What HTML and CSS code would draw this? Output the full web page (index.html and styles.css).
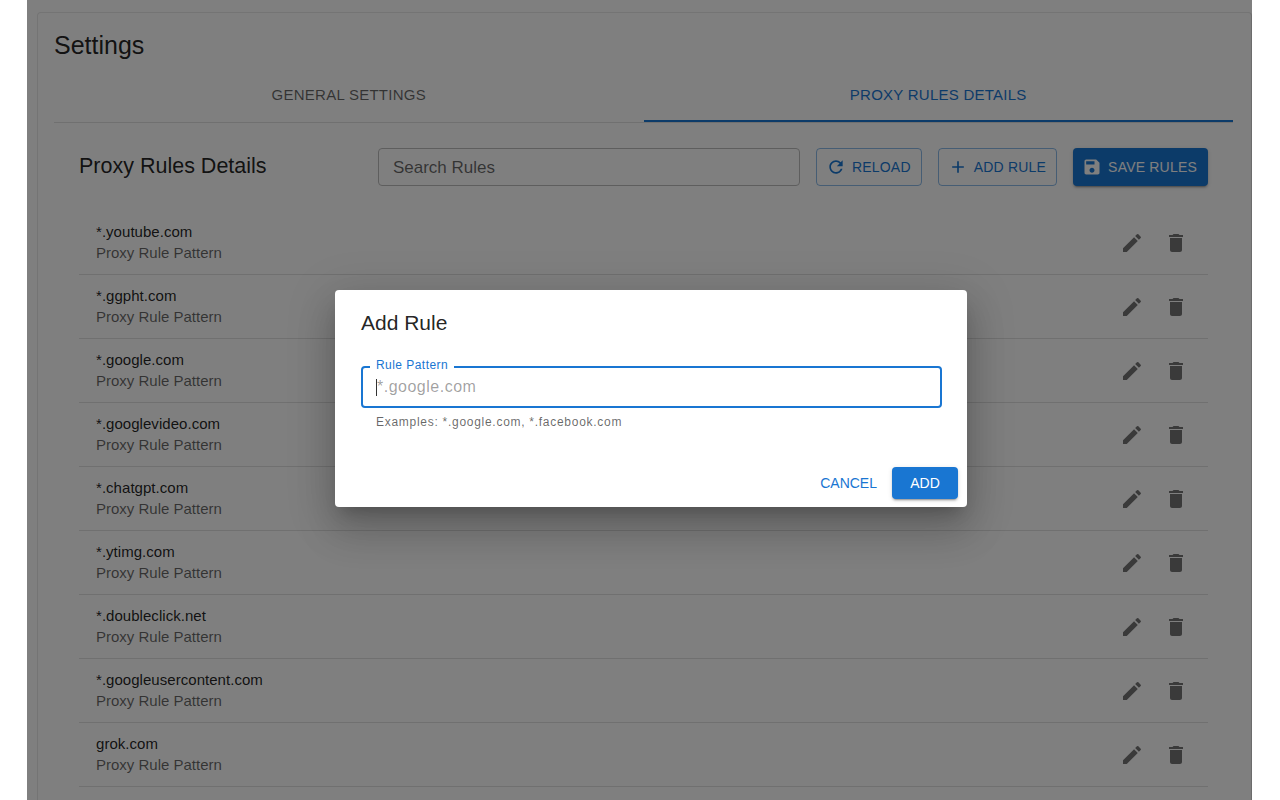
FILE: index.html
```html
<!DOCTYPE html>
<html lang="en">

<head>
  <meta charset="UTF-8">
  <meta name="viewport" content="width=device-width, initial-scale=1.0">
  <title>Settings</title>
  <link rel="stylesheet" href="styles.css">
</head>

<body>
  <div class="screen">
    <div class="card">
      <h2 class="card-title">Settings</h2>
      <div class="tabs">
        <div class="tab">GENERAL SETTINGS</div>
        <div class="tab tab-active">PROXY RULES DETAILS</div>
      </div>

      <div class="panel">
        <div class="toolbar">
          <h3 class="panel-title">Proxy Rules Details</h3>
          <div class="search">Search Rules</div>
          <button class="btn btn-outline">
            <svg viewBox="0 0 24 24"><path d="M17.65 6.35C16.2 4.9 14.21 4 12 4c-4.42 0-7.99 3.58-7.99 8s3.57 8 7.99 8c3.73 0 6.84-2.55 7.73-6h-2.08c-.82 2.33-3.04 4-5.65 4-3.31 0-6-2.69-6-6s2.69-6 6-6c1.66 0 3.14.69 4.22 1.78L13 11h7V4l-2.35 2.35z"/></svg>
            RELOAD
          </button>
          <button class="btn btn-outline">
            <svg viewBox="0 0 24 24"><path d="M19 13h-6v6h-2v-6H5v-2h6V5h2v6h6v2z"/></svg>
            ADD RULE
          </button>
          <button class="btn btn-solid">
            <svg viewBox="0 0 24 24"><path d="M17 3H5c-1.11 0-2 .9-2 2v14c0 1.1.89 2 2 2h14c1.1 0 2-.9 2-2V7l-4-4zm-5 16c-1.66 0-3-1.34-3-3s1.34-3 3-3 3 1.34 3 3-1.34 3-3 3zm3-10H5V5h10v4z"/></svg>
            SAVE RULES
          </button>
        </div>

        <ul class="rules">
          <li class="rule">
            <div class="rule-text"><div class="rule-name">*.youtube.com</div><div class="rule-sub">Proxy Rule Pattern</div></div>
            <svg class="icon" viewBox="0 0 24 24"><path d="M3 17.25V21h3.75L17.81 9.94l-3.75-3.75L3 17.25zM20.71 7.04c.39-.39.39-1.02 0-1.41l-2.34-2.34a.9959.9959 0 0 0-1.41 0l-1.83 1.83 3.75 3.75 1.83-1.83z"/></svg>
            <svg class="icon" viewBox="0 0 24 24"><path d="M6 19c0 1.1.9 2 2 2h8c1.1 0 2-.9 2-2V7H6v12zM19 4h-3.5l-1-1h-5l-1 1H5v2h14V4z"/></svg>
          </li>
          <li class="rule">
            <div class="rule-text"><div class="rule-name">*.ggpht.com</div><div class="rule-sub">Proxy Rule Pattern</div></div>
            <svg class="icon" viewBox="0 0 24 24"><path d="M3 17.25V21h3.75L17.81 9.94l-3.75-3.75L3 17.25zM20.71 7.04c.39-.39.39-1.02 0-1.41l-2.34-2.34a.9959.9959 0 0 0-1.41 0l-1.83 1.83 3.75 3.75 1.83-1.83z"/></svg>
            <svg class="icon" viewBox="0 0 24 24"><path d="M6 19c0 1.1.9 2 2 2h8c1.1 0 2-.9 2-2V7H6v12zM19 4h-3.5l-1-1h-5l-1 1H5v2h14V4z"/></svg>
          </li>
          <li class="rule">
            <div class="rule-text"><div class="rule-name">*.google.com</div><div class="rule-sub">Proxy Rule Pattern</div></div>
            <svg class="icon" viewBox="0 0 24 24"><path d="M3 17.25V21h3.75L17.81 9.94l-3.75-3.75L3 17.25zM20.71 7.04c.39-.39.39-1.02 0-1.41l-2.34-2.34a.9959.9959 0 0 0-1.41 0l-1.83 1.83 3.75 3.75 1.83-1.83z"/></svg>
            <svg class="icon" viewBox="0 0 24 24"><path d="M6 19c0 1.1.9 2 2 2h8c1.1 0 2-.9 2-2V7H6v12zM19 4h-3.5l-1-1h-5l-1 1H5v2h14V4z"/></svg>
          </li>
          <li class="rule">
            <div class="rule-text"><div class="rule-name">*.googlevideo.com</div><div class="rule-sub">Proxy Rule Pattern</div></div>
            <svg class="icon" viewBox="0 0 24 24"><path d="M3 17.25V21h3.75L17.81 9.94l-3.75-3.75L3 17.25zM20.71 7.04c.39-.39.39-1.02 0-1.41l-2.34-2.34a.9959.9959 0 0 0-1.41 0l-1.83 1.83 3.75 3.75 1.83-1.83z"/></svg>
            <svg class="icon" viewBox="0 0 24 24"><path d="M6 19c0 1.1.9 2 2 2h8c1.1 0 2-.9 2-2V7H6v12zM19 4h-3.5l-1-1h-5l-1 1H5v2h14V4z"/></svg>
          </li>
          <li class="rule">
            <div class="rule-text"><div class="rule-name">*.chatgpt.com</div><div class="rule-sub">Proxy Rule Pattern</div></div>
            <svg class="icon" viewBox="0 0 24 24"><path d="M3 17.25V21h3.75L17.81 9.94l-3.75-3.75L3 17.25zM20.71 7.04c.39-.39.39-1.02 0-1.41l-2.34-2.34a.9959.9959 0 0 0-1.41 0l-1.83 1.83 3.75 3.75 1.83-1.83z"/></svg>
            <svg class="icon" viewBox="0 0 24 24"><path d="M6 19c0 1.1.9 2 2 2h8c1.1 0 2-.9 2-2V7H6v12zM19 4h-3.5l-1-1h-5l-1 1H5v2h14V4z"/></svg>
          </li>
          <li class="rule">
            <div class="rule-text"><div class="rule-name">*.ytimg.com</div><div class="rule-sub">Proxy Rule Pattern</div></div>
            <svg class="icon" viewBox="0 0 24 24"><path d="M3 17.25V21h3.75L17.81 9.94l-3.75-3.75L3 17.25zM20.71 7.04c.39-.39.39-1.02 0-1.41l-2.34-2.34a.9959.9959 0 0 0-1.41 0l-1.83 1.83 3.75 3.75 1.83-1.83z"/></svg>
            <svg class="icon" viewBox="0 0 24 24"><path d="M6 19c0 1.1.9 2 2 2h8c1.1 0 2-.9 2-2V7H6v12zM19 4h-3.5l-1-1h-5l-1 1H5v2h14V4z"/></svg>
          </li>
          <li class="rule">
            <div class="rule-text"><div class="rule-name">*.doubleclick.net</div><div class="rule-sub">Proxy Rule Pattern</div></div>
            <svg class="icon" viewBox="0 0 24 24"><path d="M3 17.25V21h3.75L17.81 9.94l-3.75-3.75L3 17.25zM20.71 7.04c.39-.39.39-1.02 0-1.41l-2.34-2.34a.9959.9959 0 0 0-1.41 0l-1.83 1.83 3.75 3.75 1.83-1.83z"/></svg>
            <svg class="icon" viewBox="0 0 24 24"><path d="M6 19c0 1.1.9 2 2 2h8c1.1 0 2-.9 2-2V7H6v12zM19 4h-3.5l-1-1h-5l-1 1H5v2h14V4z"/></svg>
          </li>
          <li class="rule">
            <div class="rule-text"><div class="rule-name">*.googleusercontent.com</div><div class="rule-sub">Proxy Rule Pattern</div></div>
            <svg class="icon" viewBox="0 0 24 24"><path d="M3 17.25V21h3.75L17.81 9.94l-3.75-3.75L3 17.25zM20.71 7.04c.39-.39.39-1.02 0-1.41l-2.34-2.34a.9959.9959 0 0 0-1.41 0l-1.83 1.83 3.75 3.75 1.83-1.83z"/></svg>
            <svg class="icon" viewBox="0 0 24 24"><path d="M6 19c0 1.1.9 2 2 2h8c1.1 0 2-.9 2-2V7H6v12zM19 4h-3.5l-1-1h-5l-1 1H5v2h14V4z"/></svg>
          </li>
          <li class="rule">
            <div class="rule-text"><div class="rule-name">grok.com</div><div class="rule-sub">Proxy Rule Pattern</div></div>
            <svg class="icon" viewBox="0 0 24 24"><path d="M3 17.25V21h3.75L17.81 9.94l-3.75-3.75L3 17.25zM20.71 7.04c.39-.39.39-1.02 0-1.41l-2.34-2.34a.9959.9959 0 0 0-1.41 0l-1.83 1.83 3.75 3.75 1.83-1.83z"/></svg>
            <svg class="icon" viewBox="0 0 24 24"><path d="M6 19c0 1.1.9 2 2 2h8c1.1 0 2-.9 2-2V7H6v12zM19 4h-3.5l-1-1h-5l-1 1H5v2h14V4z"/></svg>
          </li>
        </ul>
      </div>
    </div>

    <div class="backdrop"></div>

    <div class="dialog">
      <h2 class="dialog-title">Add Rule</h2>
      <div class="field">
        <span class="field-label">Rule Pattern</span>
        <span class="caret"></span>
        <input class="field-input" type="text" placeholder="*.google.com">
      </div>
      <p class="helper">Examples: *.google.com, *.facebook.com</p>
      <div class="dialog-actions">
        <button class="btn-text">CANCEL</button>
        <button class="btn-add">ADD</button>
      </div>
    </div>
  </div>
</body>

</html>
```

FILE: styles.css
```css
html,
body {
  margin: 0;
  height: 100%;
  overflow: hidden;
  background-color: #ffffff;
}

body {
  font-family: "Liberation Sans", Arial, sans-serif;
  color: rgba(0, 0, 0, 0.87);
}

.screen {
  position: relative;
  width: 1225px;
  height: 800px;
  margin-left: 27px;
  padding: 12px 0 0 10px;
  box-sizing: border-box;
  overflow: hidden;
  background-color: #ffffff;
}

.card {
  border: 1px solid #e8e8e8;
  border-right-color: #d8d8d8;
  border-radius: 4px;
  padding: 16px 18px 0 16px;
  height: 900px;
}

.card-title {
  margin: 0;
  font-size: 25px;
  font-weight: 400;
  line-height: 32px;
}

.tabs {
  display: flex;
  margin-top: 17px;
  border-bottom: 1px solid #e0e0e0;
}

.tab {
  flex: 1;
  height: 44px;
  line-height: 34px;
  box-sizing: border-box;
  text-align: center;
  font-size: 15px;
  letter-spacing: 0.25px;
  color: rgba(0, 0, 0, 0.6);
}

.tab-active {
  color: #1976d2;
  border-bottom: 2px solid #1976d2;
}

.panel {
  padding: 25px 25px 0;
}

.toolbar {
  display: flex;
  align-items: center;
  gap: 16px;
}

.panel-title {
  margin: 0 0 2px;
  flex: 1;
  font-size: 21.5px;
  font-weight: 400;
}

.search {
  width: 422px;
  height: 38px;
  line-height: 38px;
  box-sizing: border-box;
  padding-left: 14px;
  border: 1px solid #bdbdbd;
  border-radius: 4px;
  font-size: 17px;
  color: rgba(0, 0, 0, 0.6);
}

.btn {
  display: flex;
  align-items: center;
  gap: 6px;
  height: 38px;
  box-sizing: border-box;
  padding: 0 10px 0 9px;
  border-radius: 4px;
  font-family: inherit;
  font-size: 14px;
  letter-spacing: 0.2px;
}

.btn svg {
  width: 20px;
  height: 20px;
  fill: currentColor;
}

.btn-outline {
  background-color: transparent;
  border: 1px solid rgba(25, 118, 210, 0.5);
  color: #1976d2;
}

.btn-solid {
  padding-right: 11px;
  background-color: #1976d2;
  border: none;
  color: #ffffff;
  box-shadow: 0 3px 1px -2px rgba(0, 0, 0, 0.2), 0 2px 2px 0 rgba(0, 0, 0, 0.14), 0 1px 5px 0 rgba(0, 0, 0, 0.12);
}

.rules {
  list-style: none;
  margin: 25px 0 0;
  padding: 0;
}

.rule {
  display: flex;
  align-items: center;
  gap: 20px;
  height: 64px;
  box-sizing: border-box;
  padding: 0 20px 0 17px;
  border-bottom: 1px solid #e0e0e0;
}

.rule-text {
  flex: 1;
}

.rule-name {
  font-size: 15px;
  line-height: 21px;
  letter-spacing: 0.04px;
}

.rule-sub {
  font-size: 15px;
  line-height: 22px;
  color: rgba(0, 0, 0, 0.6);
}

.icon {
  width: 24px;
  height: 24px;
  fill: rgba(0, 0, 0, 0.54);
}

.backdrop {
  position: absolute;
  top: 0;
  left: 0;
  right: 0;
  bottom: 0;
  background-color: rgba(0, 0, 0, 0.5);
}

.dialog {
  position: absolute;
  top: 290px;
  left: 308px;
  width: 632px;
  height: 217px;
  box-sizing: border-box;
  padding: 16px 25px 0 26px;
  border-radius: 4px;
  background-color: #ffffff;
  box-shadow: 0 11px 15px -7px rgba(0, 0, 0, 0.2), 0 24px 38px 3px rgba(0, 0, 0, 0.14), 0 9px 46px 8px rgba(0, 0, 0, 0.12);
}

.dialog-title {
  margin: 0;
  font-size: 21px;
  font-weight: 400;
  line-height: 34px;
}

.field {
  position: relative;
  display: flex;
  align-items: center;
  height: 42px;
  box-sizing: border-box;
  margin-top: 26px;
  padding-left: 13px;
  border: 2px solid #1976d2;
  border-radius: 4px;
}

.field-label {
  position: absolute;
  top: -10px;
  left: 7px;
  padding: 0 6px;
  background-color: #ffffff;
  font-size: 12px;
  line-height: 14px;
  letter-spacing: 0.45px;
  color: #1976d2;
}

.caret {
  width: 1px;
  height: 17px;
  background-color: #333333;
}

.field-input {
  flex: 1;
  border: none;
  outline: none;
  padding: 0;
  font-family: inherit;
  font-size: 16px;
  letter-spacing: 0.5px;
}

.field-input::placeholder {
  color: rgba(0, 0, 0, 0.38);
  opacity: 1;
}

.helper {
  margin: 7px 0 0 15px;
  font-size: 12px;
  line-height: 14px;
  letter-spacing: 0.72px;
  color: rgba(0, 0, 0, 0.6);
}

.dialog-actions {
  display: flex;
  justify-content: flex-end;
  align-items: center;
  gap: 15px;
  margin: 38px -16px 0 0;
}

.btn-text {
  padding: 0;
  border: none;
  background: none;
  font-family: inherit;
  font-size: 14px;
  color: #1976d2;
}

.btn-add {
  width: 66px;
  height: 32px;
  padding: 0;
  border: none;
  border-radius: 4px;
  background-color: #1976d2;
  color: #ffffff;
  font-family: inherit;
  font-size: 14px;
  box-shadow: 0 3px 1px -2px rgba(0, 0, 0, 0.2), 0 2px 2px 0 rgba(0, 0, 0, 0.14), 0 1px 5px 0 rgba(0, 0, 0, 0.12);
}
```
